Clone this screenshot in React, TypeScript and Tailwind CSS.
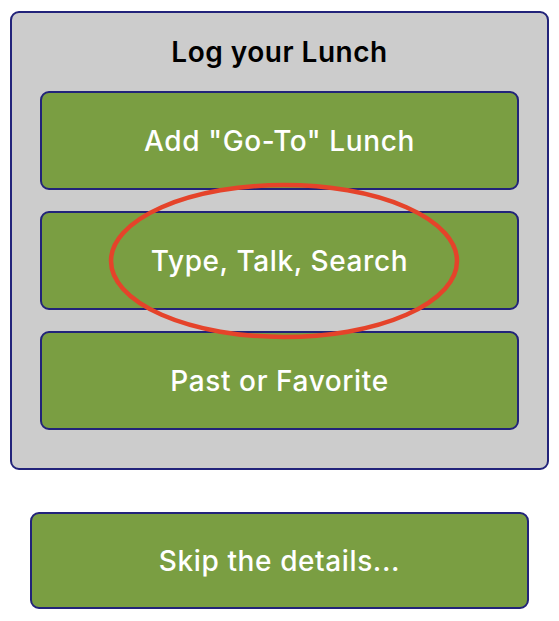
const FONT = { fontFamily: "Inter, 'Noto Sans', sans-serif" };

const options = ['Add "Go-To" Lunch', "Type, Talk, Search", "Past or Favorite"];

function GreenButton({ label, className = "" }: { label: string; className?: string }) {
  return (
    <button
      className={`flex items-center justify-center rounded-[9px] border-2 border-[#22237a] bg-[#7a9e42] text-[28px] font-medium tracking-[0.6px] text-white ${className}`}
    >
      {label}
    </button>
  );
}

export default function App() {
  return (
    <div className="relative flex h-[621px] w-[559px] flex-col bg-white pl-[10px] pt-[11px]" style={FONT}>
      <div className="flex h-[459px] w-[539px] flex-col rounded-[9px] border-2 border-[#22237a] bg-[#cccccc] px-[28px] pt-[22px]">
        <h1 className="text-center text-[28px] font-semibold leading-[34px] tracking-[0.5px] text-black">Log your Lunch</h1>
        <div className="mt-[22px] flex flex-col gap-[21px]">
          {options.map((o) => (
            <GreenButton key={o} label={o} className="h-[99px] w-full" />
          ))}
        </div>
      </div>

      <div className="ml-[20px] mt-[42px]">
        <GreenButton label="Skip the details..." className="h-[97px] w-[499px]" />
      </div>

      {/* red annotation circle */}
      <svg className="pointer-events-none absolute left-0 top-0" width="559" height="621">
        <ellipse cx="284" cy="261" rx="173" ry="76" fill="none" stroke="#e5432a" strokeWidth="4.5" />
      </svg>
    </div>
  );
}
